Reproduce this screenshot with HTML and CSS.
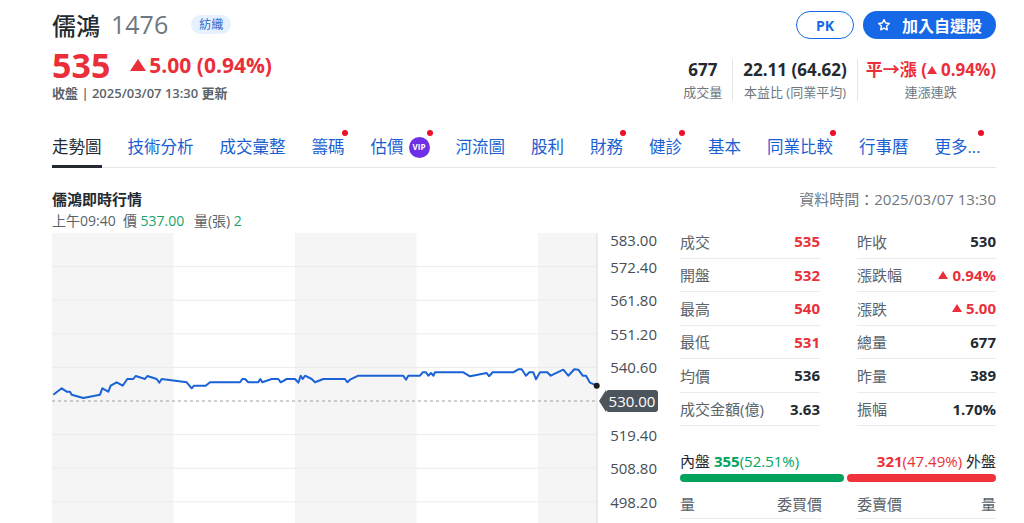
FILE: index.html
```html
<!DOCTYPE html>
<html lang="zh-TW">
<head>
	<meta charset="UTF-8">
	<title>儒鴻 1476</title>
	<link rel="stylesheet" href="styles.css">
</head>
<body>
	<div class="page">
		<!-- 標題區 -->
		<div class="quote-head">
			<div class="head-left">
				<div class="name-row">
					<h1 class="name">儒鴻</h1>
					<span class="code">1476</span>
					<span class="badge">紡織</span>
				</div>
				<div class="price-row">
					<span class="price">535</span>
					<span class="change"><i class="tri-lg"></i>5.00 (0.94%)</span>
				</div>
				<div class="updated">收盤 | 2025/03/07 13:30 更新</div>
			</div>
			<div class="head-right">
				<div class="actions">
					<a class="btn-pk" href="javascript:;">PK</a>
					<a class="btn-watch" href="javascript:;">
						<svg width="14" height="14" viewBox="0 0 24 24"><path d="M12 2.8l2.8 5.8 6.3.9-4.6 4.4 1.1 6.3L12 17.2l-5.6 3 1.1-6.3-4.6-4.4 6.3-.9z" fill="none" stroke="#fff" stroke-width="2.4" stroke-linejoin="round"/></svg>
						加入自選股
					</a>
				</div>
				<div class="stats">
					<div class="stat"><b>677</b><span>成交量</span></div>
					<div class="stat"><b>22.11 (64.62)</b><span>本益比 (同業平均)</span></div>
					<div class="stat up"><b>平→漲 (<i class="tri-sm"></i>0.94%)</b><span>連漲連跌</span></div>
				</div>
			</div>
		</div>

		<!-- 分頁 -->
		<ul class="tabs">
			<li class="tab on">走勢圖</li>
			<li class="tab">技術分析</li>
			<li class="tab">成交彙整</li>
			<li class="tab dot">籌碼</li>
			<li class="tab dot">估價<span class="vip">VIP</span></li>
			<li class="tab">河流圖</li>
			<li class="tab">股利</li>
			<li class="tab dot">財務</li>
			<li class="tab dot">健診</li>
			<li class="tab">基本</li>
			<li class="tab dot">同業比較</li>
			<li class="tab">行事曆</li>
			<li class="tab dot">更多...</li>
		</ul>

		<!-- 即時行情 -->
		<div class="rt-head">
			<h2 class="rt-title">儒鴻即時行情</h2>
			<span class="rt-time">資料時間：2025/03/07 13:30</span>
		</div>
		<div class="rt-body">
			<div class="chart-col">
				<div class="tick-info">上午09:40&nbsp; 價 <em>537.00</em> 量(張) <em>2</em></div>
				<div class="chart">
					<svg viewBox="0 0 548 290">
						<rect x="0" y="0" width="121.5" height="290" fill="#f5f5f5"/>
						<rect x="243" y="0" width="121.5" height="290" fill="#f5f5f5"/>
						<rect x="486" y="0" width="59" height="290" fill="#f5f5f5"/>
						<g stroke="#ebebeb" stroke-width="1">
							<line x1="0" y1="33.6" x2="545" y2="33.6"/>
							<line x1="0" y1="67.2" x2="545" y2="67.2"/>
							<line x1="0" y1="100.8" x2="545" y2="100.8"/>
							<line x1="0" y1="134.4" x2="545" y2="134.4"/>
							<line x1="0" y1="201.6" x2="545" y2="201.6"/>
							<line x1="0" y1="235.2" x2="545" y2="235.2"/>
							<line x1="0" y1="268.8" x2="545" y2="268.8"/>
						</g>
						<line x1="545" y1="0" x2="545" y2="290" stroke="#dcdcdc"/>
						<line x1="0" y1="168" x2="545" y2="168" stroke="#a0a0a0" stroke-dasharray="3 3"/>
						<path d="M1.3 161.7 L9.7 155.3 L14.7 158.7 L18 158.7 L19.7 161.7 L31.3 165 L48 161.7 L50.3 155.3 L56.3 158.7 L58.7 152.7 L64.7 149.3 L70.7 152.7 L75.3 146 L81.3 146 L83.7 143 L93 146 L95.3 143 L104.7 146 L107.3 149.7 L109.7 146 L134.7 149.3 L139.7 155.3 L142 152.7 L153.7 152.7 L158 149.3 L188 149.3 L190.3 146 L193 146 L196.3 149.3 L206.3 149.3 L208.3 146 L210.3 149.3 L219.7 146 L226.3 146 L228.7 149.3 L234.7 146 L243 146 L246.3 149.7 L248.7 142.7 L250.7 146 L253 142.7 L259.7 146 L263 149.3 L271.3 146 L293 146 L295.3 149.3 L298 146.7 L306.3 142.7 L351.3 142.7 L354 146.7 L356.3 142.7 L368 142.7 L370.7 139.3 L374 139.3 L376.3 142.7 L379 140 L381.3 142.7 L383 139.3 L411.3 139.3 L418 143.3 L434.7 140 L437 143.3 L440.7 139.3 L461.3 139.3 L466.3 136.3 L469.7 136.3 L474 142.7 L477.3 139.3 L481.3 139.3 L484 146.3 L488 139.3 L495.3 139.3 L498.7 142.7 L511.3 136.7 L516.3 142.7 L522.3 136.3 L526.3 136.7 L530.7 142.7 L534 142.7 L538 149.7 L544.7 152.7" fill="none" stroke="#1b62d6" stroke-width="2" stroke-linejoin="round"/>
						<circle cx="544.7" cy="152.7" r="3" fill="#1d1d1d"/>
					</svg>
					<div class="yaxis">
						<span style="top:7px">583.00</span>
						<span style="top:33.6px">572.40</span>
						<span style="top:67.2px">561.80</span>
						<span style="top:100.8px">551.20</span>
						<span style="top:134.4px">540.60</span>
						<span style="top:201.6px">519.40</span>
						<span style="top:235.2px">508.80</span>
						<span style="top:268.8px">498.20</span>
						<div class="ytag">530.00</div>
					</div>
				</div>
			</div>

			<div class="stats-col">
				<div class="grid">
					<div class="row"><span>成交</span><b class="up">535</b></div>
					<div class="row"><span>昨收</span><b>530</b></div>
					<div class="row"><span>開盤</span><b class="up">532</b></div>
					<div class="row"><span>漲跌幅</span><b class="up"><i class="tri-sm"></i>0.94%</b></div>
					<div class="row"><span>最高</span><b class="up">540</b></div>
					<div class="row"><span>漲跌</span><b class="up"><i class="tri-sm"></i>5.00</b></div>
					<div class="row"><span>最低</span><b class="up">531</b></div>
					<div class="row"><span>總量</span><b>677</b></div>
					<div class="row"><span>均價</span><b>536</b></div>
					<div class="row"><span>昨量</span><b>389</b></div>
					<div class="row"><span>成交金額(億)</span><b>3.63</b></div>
					<div class="row"><span>振幅</span><b>1.70%</b></div>
				</div>
				<div class="inout">
					<div>內盤 <span class="down"><b>355</b>(52.51%)</span></div>
					<div><span class="up"><b>321</b>(47.49%)</span> 外盤</div>
				</div>
				<div class="bar">
					<i class="bar-in" style="flex:52.51"></i>
					<i class="bar-out" style="flex:47.49"></i>
				</div>
				<div class="book-head">
					<div><span>量</span><span>委買價</span></div>
					<div><span>委賣價</span><span>量</span></div>
				</div>
			</div>
		</div>
	</div>
</body>
</html>
```

FILE: styles.css
```css
* {
	margin: 0;
	padding: 0;
	box-sizing: border-box;
}
body {
	font-family: "Open Sans", "Noto Sans CJK TC", sans-serif;
	color: #232a31;
	background: #fff;
}
a {
	text-decoration: none;
}
li {
	list-style: none;
}
.up {
	color: #eb2f3a;
}
.down {
	color: #00a35e;
}
.page {
	width: 944px;
	margin-left: 52px;
}

/* 標題區 */
.quote-head {
	display: flex;
	justify-content: space-between;
	padding-top: 6px;
}
.name-row {
	display: flex;
	align-items: center;
	height: 36px;
}
.name {
	font-size: 24px;
	font-weight: 500;
}
.code {
	margin-left: 11px;
	font-size: 25px;
	color: #6e7780;
}
.badge {
	margin-left: 23px;
	padding: 0 8px;
	font-size: 12px;
	line-height: 19px;
	color: #2d6bd0;
	background: #e7f1fd;
	border-radius: 10px;
}
.price-row {
	display: flex;
	align-items: center;
	height: 40px;
	margin-top: 3px;
	color: #eb2f3a;
}
.price {
	font-size: 34px;
	font-weight: 700;
}
.change {
	display: flex;
	align-items: center;
	margin-left: 20px;
	font-size: 21px;
	font-weight: 700;
}
.tri-lg {
	width: 0;
	height: 0;
	margin-right: 3px;
	border-left: 8px solid transparent;
	border-right: 8px solid transparent;
	border-bottom: 12px solid currentColor;
}
.tri-sm {
	display: inline-block;
	width: 0;
	height: 0;
	margin: 0 4px 2px 0;
	border-left: 5px solid transparent;
	border-right: 5px solid transparent;
	border-bottom: 8px solid currentColor;
}
.updated {
	margin-top: -1px;
	font-size: 13px;
	font-weight: 600;
	line-height: 18px;
	color: #5b636a;
}
.head-right {
	display: flex;
	flex-direction: column;
	align-items: flex-end;
}
.actions {
	display: flex;
	gap: 9px;
	margin-top: 5px;
}
.btn-pk,
.btn-watch {
	display: flex;
	justify-content: center;
	align-items: center;
	height: 28px;
	border-radius: 14px;
	font-weight: 700;
}
.btn-pk {
	width: 58px;
	border: 1.5px solid #1668e6;
	color: #1668e6;
	font-size: 14px;
}
.btn-watch {
	gap: 11px;
	width: 133px;
	color: #fff;
	font-size: 16px;
	background: #1668e6;
}
.stats {
	display: flex;
	margin-top: 20px;
}
.stat {
	padding: 0 10px;
	text-align: center;
	border-left: 1px solid #e6e6e6;
}
.stat:first-child {
	border-left: none;
}
.stat:last-child {
	padding: 0 0 0 8px;
}
.stat b {
	display: block;
	font-size: 17px;
	line-height: 22px;
}
.stat span {
	display: block;
	margin-top: 2px;
	font-size: 13px;
	line-height: 18px;
	color: #6e7780;
}
.stat.up span {
	color: #6e7780;
}

/* 分頁 */
.tabs {
	display: flex;
	gap: 26px;
	margin-top: 33px;
	border-bottom: 1px solid #e6e6e6;
}
.tab {
	position: relative;
	display: flex;
	align-items: center;
	padding-bottom: 6px;
	margin-bottom: -1px;
	font-size: 16.5px;
	line-height: 24px;
	color: #1a5fd1;
	border-bottom: 3px solid transparent;
}
.tab.on {
	color: #232a31;
	border-color: #232a31;
}
.tab.dot::after {
	content: "";
	position: absolute;
	right: -3px;
	top: -5px;
	width: 6px;
	height: 6px;
	border-radius: 50%;
	background: #eb0f29;
}
.vip {
	display: flex;
	justify-content: center;
	align-items: center;
	width: 21px;
	height: 21px;
	margin-left: 5px;
	font-size: 8px;
	font-weight: 700;
	color: #fff;
	background: #6e2fe6;
	border-radius: 50%;
}

/* 即時行情 */
.rt-head {
	display: flex;
	justify-content: space-between;
	align-items: center;
	height: 20px;
	margin-top: 20px;
}
.rt-title {
	font-size: 15px;
	font-weight: 700;
}
.rt-time {
	font-size: 15px;
	color: #6e7780;
}
.rt-body {
	display: flex;
	gap: 20px;
}
.chart-col {
	width: 608px;
	padding-top: 3px;
}
.tick-info {
	font-size: 14px;
	line-height: 20px;
	color: #5b636a;
}
.tick-info em {
	margin-right: 6px;
	font-style: normal;
	color: #1aa36b;
}
.chart {
	display: flex;
	height: 290px;
	margin-top: 2px;
}
.chart svg {
	display: block;
	width: 548px;
	height: 290px;
}
.yaxis {
	position: relative;
	width: 60px;
}
.yaxis span {
	position: absolute;
	right: 3px;
	font-size: 15px;
	line-height: 20px;
	color: #464e56;
	transform: translateY(-50%);
}
.ytag {
	position: absolute;
	left: 6px;
	top: 157px;
	width: 52px;
	height: 22px;
	font-size: 15px;
	line-height: 22px;
	text-align: center;
	color: #fff;
	background: #4d555c;
	border-radius: 3px;
}
.ytag::before {
	content: "";
	position: absolute;
	right: 100%;
	top: 0;
	border-top: 11px solid transparent;
	border-bottom: 11px solid transparent;
	border-right: 7px solid #4d555c;
}

/* 右側數據 */
.stats-col {
	width: 316px;
	padding-top: 17px;
}
.grid {
	display: grid;
	grid-template-columns: 140px 139px;
	column-gap: 37px;
}
.row {
	display: flex;
	justify-content: space-between;
	align-items: center;
	height: 33.5px;
	font-size: 15px;
	border-bottom: 1px solid #ebebeb;
}
.row span {
	color: #5b636a;
}
.row b {
	display: flex;
	align-items: center;
}
.row .tri-sm {
	margin-bottom: 0;
}
.inout {
	display: flex;
	justify-content: space-between;
	margin-top: 25px;
	font-size: 15px;
	line-height: 20px;
}
.bar {
	display: flex;
	gap: 3px;
	height: 8px;
	margin-top: 3px;
}
.bar i {
	border-radius: 4px;
}
.bar-in {
	background: #00a35e;
}
.bar-out {
	background: #f0323c;
}
.book-head {
	display: grid;
	grid-template-columns: 142px 139px;
	column-gap: 35px;
	margin-top: 12px;
}
.book-head div {
	display: flex;
	justify-content: space-between;
	padding-bottom: 4px;
	font-size: 15px;
	line-height: 20px;
	color: #5b636a;
	border-bottom: 1px solid #ebebeb;
}
```
